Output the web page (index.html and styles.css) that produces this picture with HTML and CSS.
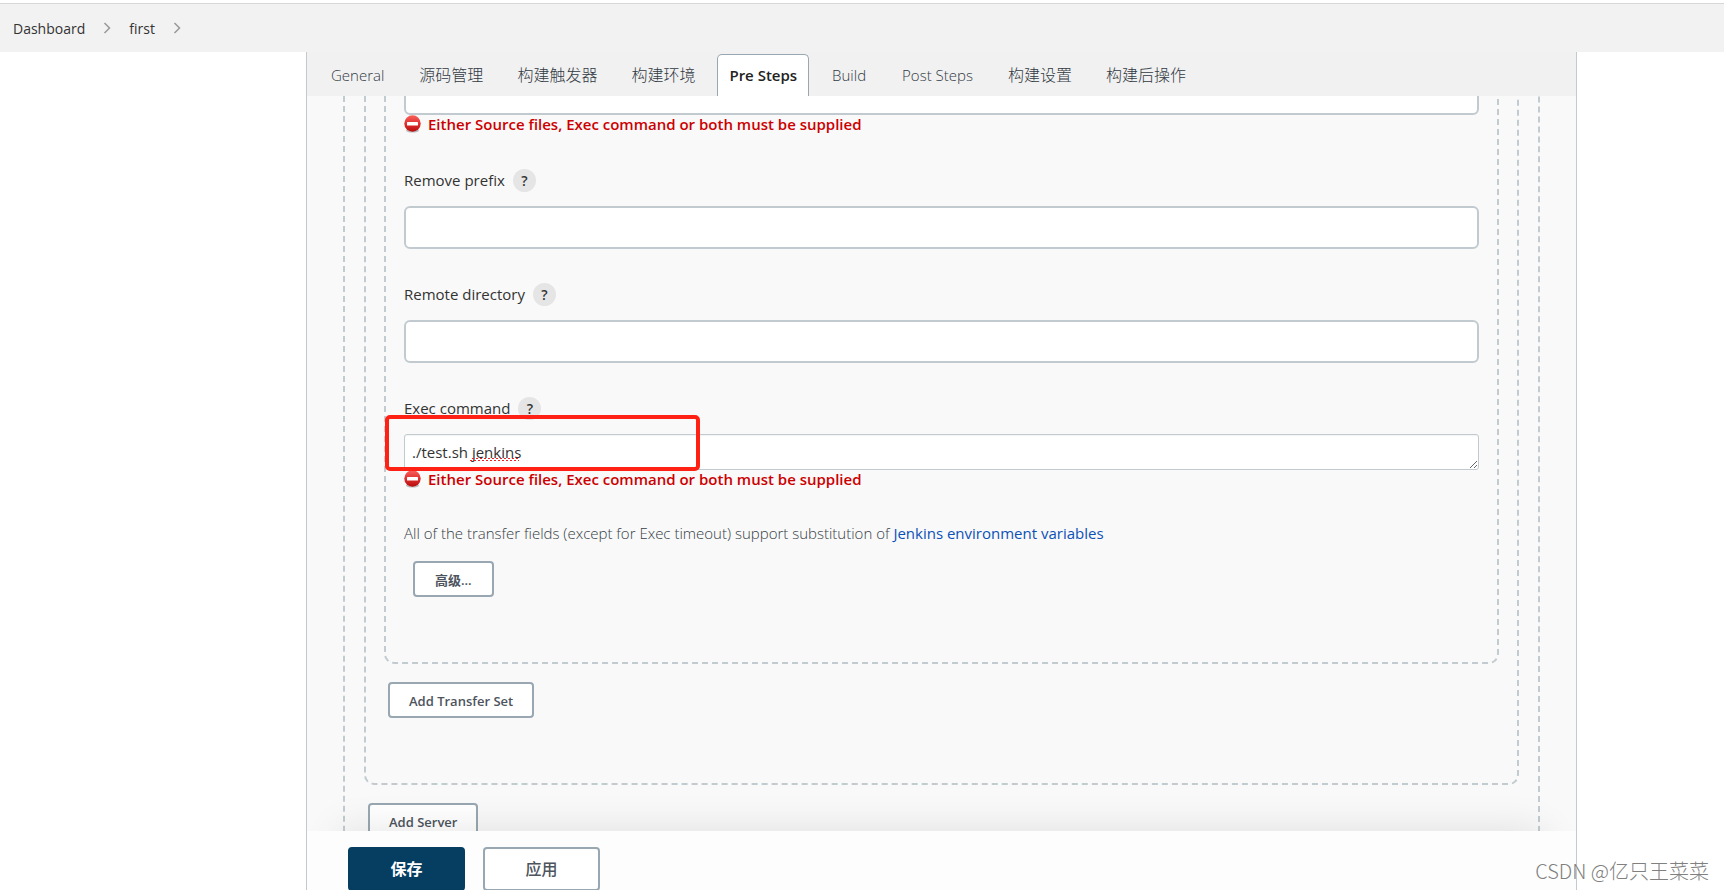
FILE: index.html
```html
<!DOCTYPE html>
<html lang="zh-CN">
<head>
<meta charset="utf-8">
<title>first Config [Jenkins]</title>
<link rel="stylesheet" href="styles.css">
</head>
<body>
<nav class="breadcrumbs" aria-label="breadcrumb">
  <a href="#">Dashboard</a>
  <svg class="chevron" viewBox="0 0 8 12" aria-hidden="true"><path d="M1.5 1l5 5-5 5"/></svg>
  <a href="#">first</a>
  <svg class="chevron" viewBox="0 0 8 12" aria-hidden="true"><path d="M1.5 1l5 5-5 5"/></svg>
</nav>
<main class="panel">
  <nav class="tabs" aria-label="config sections">
    <a class="tab" href="#">General</a>
    <a class="tab tab-cjk" href="#">源码管理</a>
    <a class="tab tab-cjk" href="#">构建触发器</a>
    <a class="tab tab-cjk" href="#">构建环境</a>
    <a class="tab tab-active" href="#">Pre Steps</a>
    <a class="tab" href="#">Build</a>
    <a class="tab" href="#">Post Steps</a>
    <a class="tab tab-cjk" href="#">构建设置</a>
    <a class="tab tab-cjk" href="#">构建后操作</a>
  </nav>
  <div class="scroll">
    <div class="group group-outer">
      <div class="group group-server">
        <div class="group group-transfer">
          <input class="input input-source" type="text" aria-label="Source files">
          <div class="error">
            <svg class="stop" viewBox="0 0 17 18" aria-hidden="true">
              <defs><linearGradient id="red" x1="0" y1="0" x2="0" y2="1"><stop offset="0" stop-color="#f9625c"/><stop offset=".5" stop-color="#e03030"/><stop offset="1" stop-color="#b80d0d"/></linearGradient></defs>
              <ellipse cx="8.500" cy="15.500" rx="6.500" ry="2" fill="#000" opacity=".25"/>
              <circle cx="8.500" cy="8.500" r="8.200" fill="url(#red)"/>
              <rect x="3" y="7" width="11" height="3.500" rx=".6" fill="#fff"/>
            </svg>
            Either Source files, Exec command or both must be supplied
          </div>
          <div class="field-head"><label for="prefix">Remove prefix</label><button class="help" type="button">?</button></div>
          <input class="input" id="prefix" type="text">
          <div class="field-head"><label for="remote">Remote directory</label><button class="help" type="button">?</button></div>
          <input class="input" id="remote" type="text">
          <div class="field-head"><label for="exec">Exec command</label><button class="help" type="button">?</button></div>
          <div class="exec">
            <textarea class="textarea" id="exec" rows="1" spellcheck="false">./test.sh jenkins</textarea>
            <span class="misspell"></span>
            <span class="marker"></span>
          </div>
          <div class="error">
            <svg class="stop" viewBox="0 0 17 18" aria-hidden="true">
              <ellipse cx="8.500" cy="15.500" rx="6.500" ry="2" fill="#000" opacity=".25"/>
              <circle cx="8.500" cy="8.500" r="8.200" fill="url(#red)"/>
              <rect x="3" y="7" width="11" height="3.500" rx=".6" fill="#fff"/>
            </svg>
            Either Source files, Exec command or both must be supplied
          </div>
          <p class="note">All of the transfer fields (except for Exec timeout) support substitution of <a href="#">Jenkins environment variables</a></p>
          <button class="button button-advanced" type="button">高级...</button>
        </div>
        <button class="button button-add" type="button">Add Transfer Set</button>
      </div>
      <button class="button button-add" type="button">Add Server</button>
    </div>
  </div>
  <div class="footer">
    <div class="footer-bar">
      <button class="action action-primary" type="submit">保存</button>
      <button class="action" type="button">应用</button>
    </div>
  </div>
</main>
<div class="watermark">CSDN @亿只王菜菜</div>
</body>
</html>
```
FILE: styles.css
```css
* { box-sizing: border-box; }

body {
  margin: 0;
  height: 100vh;
  display: flex;
  flex-direction: column;
  position: relative;
  overflow: hidden;
  background: #fff;
  color: #333;
  font-family: "Open Sans", "Noto Sans CJK SC", sans-serif;
  font-size: 15px;
  line-height: 24px;
}

a { color: inherit; text-decoration: none; }
button, input, textarea { font: inherit; color: inherit; margin: 0; }

.breadcrumbs {
  flex: none;
  display: flex;
  align-items: center;
  gap: 18px;
  height: 49px;
  margin-top: 3px;
  padding: 2px 13px 0;
  border-top: 1px solid #d6d8d8;
  background: #f2f2f2;
  font-size: 14px;
}
.chevron { width: 8px; height: 12px; margin-top: -2px; fill: none; stroke: #999; stroke-width: 1.5; }

.panel {
  flex: 1;
  min-height: 0;
  display: flex;
  flex-direction: column;
  margin: 0 147px 0 306px;
  border: solid #c1cbcf;
  border-width: 0 1px;
  background: #f9f9f9;
  overflow: hidden;
}

.tabs {
  flex: none;
  display: flex;
  gap: 10px;
  padding: 2px 11px 0;
  background: #f1f1f1;
  color: #323943;
  font-weight: 300;
}
.tab {
  padding: 8px 12px 9px;
  border: 1px solid transparent;
  border-bottom: 0;
  border-radius: 5px 5px 0 0;
  white-space: nowrap;
}
.tab-cjk { padding-left: 11px; padding-right: 11px; font-size: 16px; }
.tab-active {
  padding-left: 11px;
  padding-right: 11px;
  border-color: #98a7b1;
  background: #fff;
  color: #222;
  font-weight: 600;
}

.scroll { flex: 1; min-height: 0; padding: 0 36px; overflow: hidden; }
.group { border: 2px dashed #c1cbd0; border-top: 0; border-radius: 0 0 10px 10px; }
.group-outer { padding: 0 19px 65px; }
.group-server { padding: 0 18px 65px; }
.group-transfer { padding: 0 18px 65px; }

.input {
  display: block;
  width: 100%;
  height: 43px;
  padding: 0 8px;
  border: 2px solid #c1cbcf;
  border-radius: 6px;
  background: #fff;
}
.input-source { margin-top: -24px; }

.error {
  display: flex;
  gap: 7px;
  height: 20px;
  line-height: 18px;
  color: #c00;
  font-weight: 600;
}
.stop { width: 17px; height: 18px; }

.field-head {
  display: flex;
  align-items: center;
  gap: 8px;
  margin: 34px 0 14px;
}
.field-head label { line-height: 23px; }
.help {
  width: 23px;
  height: 23px;
  padding: 0;
  border: 0;
  border-radius: 50%;
  background: #e5e5e5;
  font-size: 14px;
  line-height: 22px;
  font-weight: 600;
}

.exec { position: relative; }
.textarea {
  display: block;
  width: 100%;
  height: 36px;
  padding: 5px 7px;
  border: 1px solid #c1cbcf;
  border-radius: 3px;
  background: #fff;
  box-shadow: inset 0 1px 1px #0000000d;
  overflow: hidden;
  resize: vertical;
}
.misspell {
  position: absolute;
  left: 66px;
  top: 24px;
  width: 49px;
  height: 3px;
  background: conic-gradient(#e22 25%, transparent 0 50%, #e22 0 75%, transparent 0) 0 0 / 4px 3px;
}
.marker {
  position: absolute;
  left: -19px;
  top: -19px;
  width: 315px;
  height: 56px;
  border: 4px solid #ff2114;
  border-radius: 5px;
  pointer-events: none;
}

.note { margin: 31px 0 16px; color: #363d46; font-weight: 300; }
.note a { color: #0b51b8; font-weight: 500; }

.button {
  display: block;
  height: 36px;
  padding: 1px 19px 0;
  border: 2px solid #98a7b1;
  border-radius: 4px;
  background: #fff;
  color: #4d545d;
  font-size: 13px;
  font-weight: 600;
}
.button-advanced { margin-left: 9px; padding: 1px 20px 0; }
.button-add { margin: 18px 0 0 4px; }

.footer { flex: none; position: relative; }
.footer::before {
  content: "";
  position: absolute;
  inset: 0 32px;
  box-shadow: 0 0 40px #0000001c;
}
.footer-bar {
  position: relative;
  display: flex;
  gap: 18px;
  height: 59px;
  padding: 16px 41px 0;
  background: #fdfdfd;
}
.action {
  width: 117px;
  height: 44px;
  padding: 0;
  border: 2px solid #98a7b1;
  border-radius: 4px;
  background: #fff;
  color: #4d545d;
  font-size: 16px;
  font-weight: 500;
}
.action-primary { background: #063e62; border-color: #063e62; color: #fff; font-weight: 700; }

.watermark {
  position: absolute;
  right: 15px;
  bottom: 4px;
  color: #808080;
  font-family: "Noto Sans CJK SC", sans-serif;
  font-size: 20px;
  font-weight: 300;
  line-height: 30px;
  text-shadow: -1px -1px 0 #fff;
}
```
